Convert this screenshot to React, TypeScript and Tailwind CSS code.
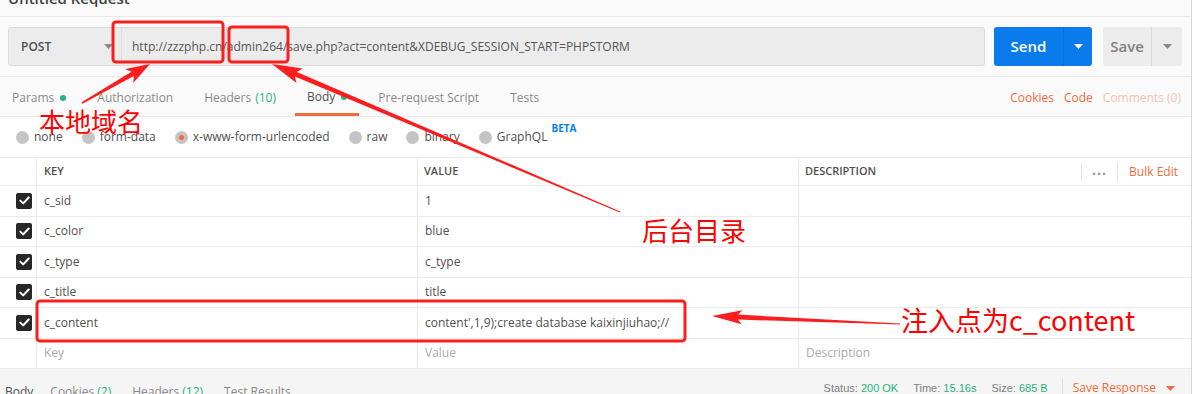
import React from "react";

type Pt = [number, number];

// tapered filled arrow, like the ones from screenshot markup tools
const arrowPoints = (
  tail: Pt,
  tip: Pt,
  headLen: number,
  headW: number,
  tailW: number,
  neckW: number
) => {
  const dx = tip[0] - tail[0];
  const dy = tip[1] - tail[1];
  const len = Math.hypot(dx, dy);
  const ux = dx / len;
  const uy = dy / len;
  const nx = -uy;
  const ny = ux;
  const bx = tip[0] - ux * headLen;
  const by = tip[1] - uy * headLen;
  const wx = bx - ux * 4;
  const wy = by - uy * 4;
  const pts: Pt[] = [
    [tail[0] + (nx * tailW) / 2, tail[1] + (ny * tailW) / 2],
    [bx + (nx * neckW) / 2, by + (ny * neckW) / 2],
    [wx + (nx * headW) / 2, wy + (ny * headW) / 2],
    tip,
    [wx - (nx * headW) / 2, wy - (ny * headW) / 2],
    [bx - (nx * neckW) / 2, by - (ny * neckW) / 2],
    [tail[0] - (nx * tailW) / 2, tail[1] - (ny * tailW) / 2],
  ];
  return pts.map((p) => `${p[0].toFixed(1)},${p[1].toFixed(1)}`).join(" ");
};

const Caret = ({ className }: { className: string }) => (
  <svg className={className} width="9" height="5" viewBox="0 0 9 5">
    <path d="M0 0h9L4.5 5z" fill="currentColor" />
  </svg>
);

const Check = () => (
  <span className="w-4 h-4 rounded-[2px] bg-[#282828] flex items-center justify-center">
    <svg width="11" height="9" viewBox="0 0 11 9">
      <path
        d="M1.3 4.6l2.9 2.8L9.7 1.5"
        fill="none"
        stroke="#fff"
        strokeWidth={2}
        strokeLinecap="round"
        strokeLinejoin="round"
      />
    </svg>
  </span>
);

const Radio = ({ label, on }: { label: string; on?: boolean }) => (
  <div className="flex items-center gap-[5px]">
    <span className="w-[13px] h-[13px] rounded-full bg-[#c4c4c4] flex items-center justify-center">
      {on && <span className="w-[5px] h-[5px] rounded-full bg-[#f26b3a]" />}
    </span>
    <span>{label}</span>
  </div>
);

const rows = [
  { key: "c_sid", value: "1" },
  { key: "c_color", value: "blue" },
  { key: "c_type", value: "c_type" },
  { key: "c_title", value: "title" },
  { key: "c_content", value: "content',1,9);create database kaixinjiuhao;//" },
];

export default function App() {
  return (
    <div className="relative w-[1200px] h-[394px] overflow-hidden bg-[#fafafa] flex font-['Open_Sans',sans-serif] text-[#505050]">
      <div className="w-[1192px] border-r border-[#d6d6d6] flex flex-col">
        {/* title */}
        <div className="h-[17px] shrink-0 border-b border-[#e9e9e9] overflow-hidden px-2">
          <div className="mt-[-13px] text-[15px] font-semibold text-[#404040]">Untitled Request</div>
        </div>

        {/* url row */}
        <div className="h-[60px] shrink-0 border-b border-[#e9e9e9] pt-[10px] pl-2 pr-[9px] flex">
          <div className="flex h-[39px] w-[977px] rounded-[3px] border border-[#dcdcdc] bg-[#ececec]">
            <div className="w-[113px] border-r border-[#dcdcdc] flex items-center justify-between pl-3 pr-[8px]">
              <span className="text-[12px] font-semibold">POST</span>
              <Caret className="text-[#8a8a8a]" />
            </div>
            <div className="flex items-center pl-[10px] text-[12px] text-[#555]">
              http://zzzphp.cn/admin264/save.php?act=content&amp;XDEBUG_SESSION_START=PHPSTORM
            </div>
          </div>
          <div className="ml-[9px] flex h-[39px] w-[98px] rounded-[3px] bg-[#097bed] text-white">
            <div className="w-[69px] flex items-center justify-center text-[15px] font-semibold">Send</div>
            <div className="flex-1 border-l border-[#0a6fd3] flex items-center justify-center">
              <Caret className="text-white" />
            </div>
          </div>
          <div className="ml-[11px] flex h-[39px] w-[79px] rounded-[3px] bg-[#ececec] text-[#808080]">
            <div className="w-[48px] flex items-center justify-center text-[15px] font-semibold">Save</div>
            <div className="flex-1 border-l border-[#dadada] flex items-center justify-center">
              <Caret className="text-[#8a8a8a]" />
            </div>
          </div>
        </div>

        {/* tabs */}
        <div className="h-[40px] shrink-0 border-b border-[#e9e9e9] flex items-stretch justify-between text-[12px] text-[#8a8a8a]">
          <div className="flex gap-[7px]">
            <div className="px-3 flex items-center gap-[6px] pt-[3px]">
              Params <span className="w-[6px] h-[6px] rounded-full bg-[#26b47f]" />
            </div>
            <div className="px-3 flex items-center pt-[3px]">Authorization</div>
            <div className="px-3 flex items-center gap-1 pt-[3px]">
              Headers <span className="text-[#26b47f]">(10)</span>
            </div>
            <div className="px-3 flex items-center gap-[6px] text-[#505050] border-b-[3px] border-[#f26b3a] pt-[3px]">
              Body <span className="w-[6px] h-[6px] rounded-full bg-[#26b47f]" />
            </div>
            <div className="px-3 flex items-center pt-[3px]">Pre-request Script</div>
            <div className="px-3 flex items-center pt-[3px]">Tests</div>
          </div>
          <div className="flex items-center gap-[10px] pr-[10px] pt-[3px]">
            <span className="text-[#f26b3a]">Cookies</span>
            <span className="text-[#f26b3a]">Code</span>
            <span className="text-[#f8c2ae]">Comments (0)</span>
          </div>
        </div>

        {/* body type radios */}
        <div className="h-[41px] shrink-0 bg-white border-b border-[#e9e9e9] flex items-center pl-[16px] gap-[19px] text-[12px]">
          <Radio label="none" />
          <Radio label="form-data" />
          <Radio label="x-www-form-urlencoded" on />
          <Radio label="raw" />
          <Radio label="binary" />
          <div className="flex items-start">
            <Radio label="GraphQL" />
            <span className="ml-[4px] mt-[-7px] text-[10px] font-bold text-[#097bed]">BETA</span>
          </div>
        </div>

        {/* table */}
        <div className="bg-white shrink-0">
          <div className="h-[28px] border-b border-[#ebebeb] grid grid-cols-[37px_381px_381px_1fr] text-[11px] font-semibold text-[#505050]">
            <div className="border-r border-[#ebebeb]" />
            <div className="border-r border-[#ebebeb] flex items-center pl-[7px]">KEY</div>
            <div className="border-r border-[#ebebeb] flex items-center pl-[6px]">VALUE</div>
            <div className="flex items-center justify-between pl-[6px]">
              <span>DESCRIPTION</span>
              <div className="flex items-center h-full">
                <span className="h-[18px] border-l border-[#e4e4e4]" />
                <span className="w-[35px] text-center tracking-[1px] text-[#909090] text-[14px] font-bold leading-none mt-[-4px]">...</span>
                <span className="h-[18px] border-l border-[#e4e4e4]" />
                <span className="pl-[11px] pr-[13px] text-[12px] font-normal text-[#f26b3a]">Bulk Edit</span>
              </div>
            </div>
          </div>
          {rows.map((r) => (
            <div
              key={r.key}
              className="h-[30.5px] border-b border-[#ebebeb] grid grid-cols-[37px_381px_381px_1fr] text-[12px] text-[#505050]"
            >
              <div className="border-r border-[#ebebeb] flex items-center justify-end pr-[4px]">
                <Check />
              </div>
              <div className="border-r border-[#ebebeb] flex items-center pl-[7px]">{r.key}</div>
              <div className="border-r border-[#ebebeb] flex items-center pl-[7px]">{r.value}</div>
              <div />
            </div>
          ))}
          <div className="h-[30.5px] border-b border-[#ebebeb] grid grid-cols-[37px_381px_381px_1fr] text-[12px] text-[#aaaaaa]">
            <div className="border-r border-[#ebebeb]" />
            <div className="border-r border-[#ebebeb] flex items-center pl-[7px]">Key</div>
            <div className="border-r border-[#ebebeb] flex items-center pl-[7px]">Value</div>
            <div className="flex items-center pl-[7px]">Description</div>
          </div>
        </div>

        {/* response bar */}
        <div className="flex-1 min-h-0 overflow-hidden bg-[#f5f5f5] flex justify-between">
          <div className="flex gap-[21px] pl-[5px] pt-[14px] text-[12px] text-[#8a8a8a]">
            <span className="text-[#505050] mr-[-4px]">Body</span>
            <span>
              Cookies <span className="text-[#26b47f]">(2)</span>
            </span>
            <span>
              Headers <span className="text-[#26b47f]">(12)</span>
            </span>
            <span>Test Results</span>
          </div>
          <div className="flex items-start pt-[11px] pr-[16px]">
            <div className="flex gap-[15px] font-['Liberation_Sans',sans-serif] text-[11px] text-[#808080]">
              <span>
                Status: <span className="text-[#26b47f]">200 OK</span>
              </span>
              <span>
                Time: <span className="text-[#26b47f]">15.16s</span>
              </span>
              <span>
                Size: <span className="text-[#26b47f]">685 B</span>
              </span>
            </div>
            <span className="ml-[14px] mt-[-2px] h-[20px] border-l border-[#dcdcdc]" />
            <span className="ml-[10px] mt-[-1px] text-[12px] text-[#f26b3a]">Save Response</span>
            <Caret className="ml-[10px] mt-[6px] text-[#f26b3a]" />
          </div>
        </div>
      </div>
      <div className="flex-1 bg-white" />

      {/* markup layer drawn on top of the screenshot */}
      <svg className="absolute inset-0 pointer-events-none" width="1200" height="394" viewBox="0 0 1200 394">
        <g fill="none" stroke="#fa1e1e" strokeWidth={3}>
          <rect x="113" y="22" width="110" height="40" rx="3" />
          <rect x="229" y="27" width="59" height="35" rx="3" />
          <rect x="37" y="301" width="648" height="40" rx="3" />
        </g>
        <g fill="#fa1e1e">
          <polygon points={arrowPoints([82, 103], [150, 64], 20, 16, 1.5, 5)} />
          <polygon points={arrowPoints([620, 212], [272, 64], 26, 16, 1, 5)} />
          <polygon points={arrowPoints([900, 324], [712, 316], 26, 14, 1, 5)} />
        </g>
      </svg>
      <span className="absolute left-[39px] top-[108px] text-[26px] leading-none text-[#ff0000] font-['Noto_Sans_CJK_SC',sans-serif]">
        本地域名
      </span>
      <span className="absolute left-[642px] top-[217px] text-[26px] leading-none text-[#ff0000] font-['Noto_Sans_CJK_SC',sans-serif]">
        后台目录
      </span>
      <span className="absolute left-[901px] top-[306px] text-[27px] leading-none text-[#ff0000] font-['Noto_Sans_CJK_SC',sans-serif]">
        注入点为c_content
      </span>
    </div>
  );
}
